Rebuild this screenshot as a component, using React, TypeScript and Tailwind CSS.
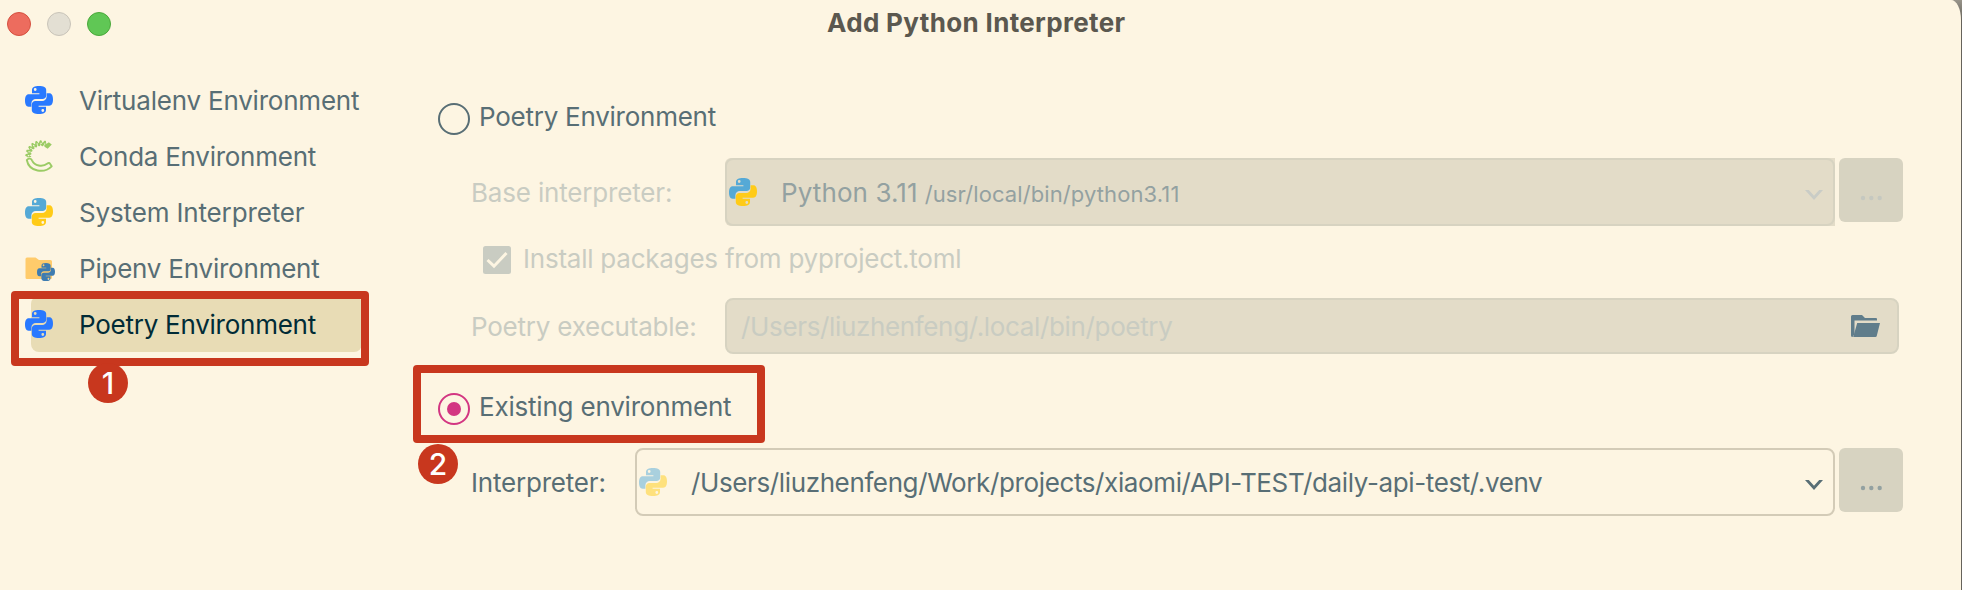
import React from "react";

const PY_TOP =
  "M14 0C9.5 0 7 1.2 7 4v3.3h7.4v1H3.8C1.2 8.300 0 10.800 0 14.500s1.200 6.200 3.600 6.200H6.400v-3.400c0-2.500 2-4.300 4.400-4.300h6.800c2 0 3.600-1.600 3.600-3.600V4c0-2.700-2.700-4-7.200-4zM10.200 2.100a1.400 1.400 0 1 1 0 2.800a1.400 1.400 0 0 1 0-2.800z";

function Python({ top, bottom }: { top: string; bottom: string }) {
  return (
    <svg viewBox="0 0 28 28" className="size-7 shrink-0" fillRule="evenodd">
      <path d={PY_TOP} fill={top} />
      <path d={PY_TOP} fill={bottom} transform="rotate(180 14 14)" />
    </svg>
  );
}

const polar = (r: number, deg: number) => {
  const a = (deg * Math.PI) / 180;
  return `${(16 + r * Math.cos(a)).toFixed(2)} ${(16 - r * Math.sin(a)).toFixed(2)}`;
};

// Triangular scales, alternating between the outer and inner edge of the snake's body
const SCALES = Array.from({ length: 15 }, (_, i) => {
  const deg = 66 + i * 8.5;
  return i % 2 === 0
    ? `M${polar(16.5, deg - 7)}L${polar(16.5, deg + 7)}L${polar(13, deg)}Z`
    : `M${polar(8.8, deg - 8)}L${polar(8.8, deg + 8)}L${polar(12, deg)}Z`;
}).join("");

function Conda() {
  return (
    <svg viewBox="0 0 28 32" className="h-8 w-7 shrink-0" fill="none" stroke="#9bcb65">
      <path d={`M${polar(12.8, 47)}A12.800 12.800 0 0 0 ${polar(12.8, 186)}`} strokeWidth="6" />
      <path d={SCALES} fill="#fdf5e2" stroke="none" />
      <path d={`M${polar(12.6, 70)}A12.600 12.600 0 0 0 ${polar(12.6, 186)}`} stroke="#fdf5e2" strokeWidth="1.200" strokeDasharray="1.200 2.600" />
      <path d="M1.800 20c1.700-2.300 4.500-1.500 5.200.3c2.500 5.700 10.500 7.200 15.500 3.200c1-.8 2-.5 2.500.2l1.700 2.600c-7 7-22.500 6.200-24.900-6.300z" strokeWidth="1.900" strokeLinejoin="round" />
    </svg>
  );
}

function PipenvFolder() {
  return (
    <svg viewBox="0 0 30 24" className="mt-0.5 h-6 w-[30px] shrink-0" fillRule="evenodd">
      <path d="M2 0.500h8.500l3.500 2.500h11.500a1.500 1.500 0 0 1 1.500 1.500v16a1.500 1.500 0 0 1-1.500 1.500H2A1.500 1.500 0 0 1 .5 20.500V2A1.500 1.500 0 0 1 2 .5z" fill="#ffcb6b" />
      <g transform="translate(12 6) scale(.643)">
        <path d={PY_TOP} fill="#3e7cb1" />
        <path d={PY_TOP} fill="#3e7cb1" transform="rotate(180 14 14)" />
      </g>
    </svg>
  );
}

function Chevron({ color }: { color: string }) {
  return (
    <svg viewBox="0 0 18 10" className="mt-1.5 h-2.5 w-[18px] shrink-0">
      <path d="M0 0h3.800L9 5.800L14.200 0H18L9 10z" fill={color} />
    </svg>
  );
}

function MoreButton({ color }: { color: string }) {
  return (
    <button className="ml-1 flex size-16 shrink-0 items-center justify-center rounded-md bg-[#d7d3c1] pt-4">
      <svg viewBox="0 0 22 6" className="h-1.5 w-[22px]" fill={color}>
        <circle cx="3" cy="3" r="2.200" />
        <circle cx="11.300" cy="3" r="2.200" />
        <circle cx="19.700" cy="3" r="2.200" />
      </svg>
    </button>
  );
}

function Step({ n, className }: { n: number; className: string }) {
  return (
    <div className={`absolute flex size-10 items-center justify-center rounded-full bg-[#c8371e] text-[30px] font-medium text-white ${className}`}>
      {n}
    </div>
  );
}

const BLUE = "#2979ff";
const items = [
  { label: "Virtualenv Environment", icon: <Python top={BLUE} bottom={BLUE} />, text: "tracking-[-0.21px]" },
  { label: "Conda Environment", icon: <Conda />, text: "tracking-[-0.26px]" },
  { label: "System Interpreter", icon: <Python top="#55a9d6" bottom="#ffcb18" />, text: "tracking-[-0.15px]" },
  { label: "Pipenv Environment", icon: <PipenvFolder />, text: "tracking-[-0.22px]" },
  { label: "Poetry Environment", icon: <Python top={BLUE} bottom={BLUE} />, text: "tracking-[-0.25px] text-[#002b36]" },
];

export default function App() {
  return (
    <div className="h-[590px] w-[1962px] overflow-hidden bg-[linear-gradient(#98948a,#66635c_20px)] font-['Inter',sans-serif] text-[26px] leading-8 text-[#586e75]">
      <div className="relative flex h-full w-[1961px] flex-col rounded-tr-[10px_20px] bg-[#fdf5e2]">
        <header className="flex h-12 shrink-0 items-center pl-[7px]">
          <div className="flex w-[104px] gap-4">
            <span className="size-6 rounded-full border border-[#d5503f] bg-[#ed6c5e]" />
            <span className="size-6 rounded-full border border-[#c9c4b9] bg-[#e3dfd3]" />
            <span className="size-6 rounded-full border border-[#4aa83a] bg-[#60c755]" />
          </div>
          <h1 className="ml-[716px] whitespace-nowrap pb-0.5 font-bold tracking-[0.34px] text-[#5b584f]">Add Python Interpreter</h1>
        </header>

        <div className="flex flex-1">
          <nav className="flex w-[400px] shrink-0 flex-col pt-6">
            {items.map((it, i) => (
              <div key={it.label} className="flex h-14 items-center pl-[25px]">
                {i === 4 && <div className="absolute left-[31px] h-14 w-[331px] rounded-lg bg-[#e8dcb5]" />}
                <div className="relative w-[54px]">{it.icon}</div>
                <span className={`relative whitespace-nowrap pt-0.5 ${it.text}`}>{it.label}</span>
              </div>
            ))}
          </nav>

          <main className="flex flex-1 flex-col pt-[52px]">
            <label className="flex h-9 items-center gap-[9px] pl-[38px]">
              <span className="mt-0.5 size-8 rounded-full border-2 border-[#586e75]" />
              <span className="pb-0.5 tracking-[-0.25px]">Poetry Environment</span>
            </label>

            <div className="mt-[22px] flex pl-[71px]">
              <span className="w-[254px] pt-[19px] tracking-[-0.17px] text-[#c9ccc2]">Base interpreter:</span>
              <div className="flex h-[68px] w-[1110px] items-center rounded-l-md bg-[#e3dcc8]">
                <div className="flex h-full w-full items-center rounded-lg border-2 border-[#d7d3c1] pl-[2px] pr-[10px]">
                  <Python top="#55a9d6" bottom="#ffcb18" />
                  <span className="ml-6 whitespace-nowrap pt-0.5 tracking-[0.1px] text-[#93a1a1]">Python 3.11</span>
                  <span className="ml-[7px] flex-1 pt-1 text-[22px] tracking-[0.1px] text-[#93a1a1]">/usr/local/bin/python3.11</span>
                  <Chevron color="#c9ccc6" />
                </div>
              </div>
              <MoreButton color="#c5c8c0" />
            </div>

            <label className="mt-[15px] flex h-9 items-center pl-[83px] text-[#c9ccc2]">
              <svg viewBox="0 0 28 28" className="mt-0.5 size-7">
                <rect width="28" height="28" rx="2.500" fill="#c9ccc2" />
                <path d="M4.500 14l6.500 6.200L23.500 7" fill="none" stroke="#fdf5e2" strokeWidth="3" />
              </svg>
              <span className="ml-3 tracking-[-0.23px]">Install packages from pyproject.toml</span>
            </label>

            <div className="mt-[21px] flex pl-[71px] text-[#c9ccc2]">
              <span className="w-[254px] pt-[13px] tracking-[-0.22px]">Poetry executable:</span>
              <div className="flex h-14 w-[1174px] items-center rounded-lg border-2 border-[#d7d3c1] bg-[#e3dcc8] pl-3.5 pr-[17px]">
                <span className="flex-1 pt-0.5 tracking-[-0.35px]">/Users/liuzhenfeng/.local/bin/poetry</span>
                <svg viewBox="0 0 29 22" className="h-[22px] w-[29px]" fill="#607d8b">
                  <path d="M1.500 0H11l3 3h11a1 1 0 0 1 1 1v1.500H3.500V19L1.500 22A1.500 1.500 0 0 1 0 20.500v-19A1.500 1.500 0 0 1 1.500 0z" />
                  <path d="M6.200 8H29l-3.200 12.800a1.500 1.500 0 0 1-1.500 1.200H2.200z" />
                </svg>
              </div>
            </div>

            <label className="mt-[36px] flex h-9 items-center gap-[9px] pl-[38px]">
              <span className="mt-0.5 flex size-8 items-center justify-center rounded-full border-2 border-[#d33682]">
                <span className="size-3.5 rounded-full bg-[#d33682]" />
              </span>
              <span className="pb-0.5 tracking-[-0.2px]">Existing environment</span>
            </label>

            <div className="mt-[22px] flex pl-[71px]">
              <span className="w-[164px] pt-[19px] tracking-[-0.2px]">Interpreter:</span>
              <div className="flex h-[68px] w-[1200px] items-center rounded-lg border-2 border-[#d3cbb7] pl-[2px] pr-[10px]">
                <Python top="#a9d0de" bottom="#fee17d" />
                <span className="ml-6 flex-1 pt-0.5 tracking-[-0.38px]">/Users/liuzhenfeng/Work/projects/xiaomi/API-TEST/daily-api-test/.venv</span>
                <Chevron color="#586e75" />
              </div>
              <MoreButton color="#93a1a1" />
            </div>
          </main>
        </div>

        <div className="absolute left-[11px] top-[291px] h-[75px] w-[358px] rounded border-8 border-[#c8371e]" />
        <Step n={1} className="left-[88px] top-[363px]" />
        <div className="absolute left-[413px] top-[365px] h-[78px] w-[352px] rounded border-8 border-[#c8371e]" />
        <Step n={2} className="left-[418px] top-[444px]" />
      </div>
    </div>
  );
}
